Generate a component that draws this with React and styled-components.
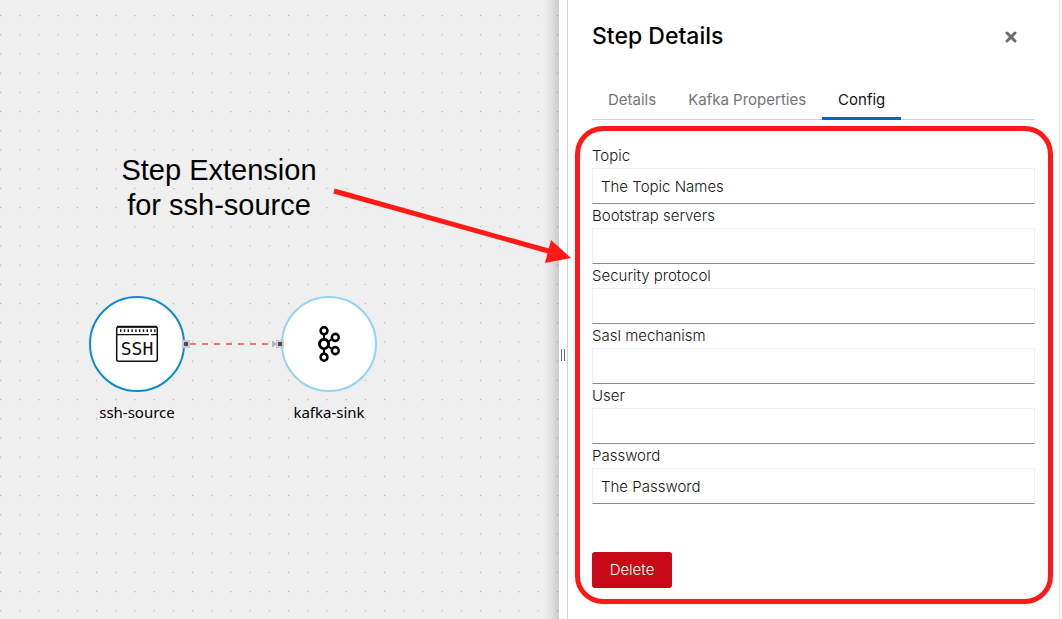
import React from "react";
import styled, { createGlobalStyle } from "styled-components";
import { SiApachekafka } from "react-icons/si";

const GlobalStyle = createGlobalStyle`
  *, *::before, *::after { box-sizing: border-box; }
  body {
    margin: 0;
    background: #fff;
    color: #151515;
    font-family: Inter, "Liberation Sans", sans-serif;
    font-size: 15px;
    font-weight: 350;
    line-height: 24px;
  }
  button, input { font: inherit; color: inherit; }
`;

const Page = styled.div`
  position: relative;
  display: flex;
  min-height: 100vh;
  overflow: hidden;
`;

const Canvas = styled.main`
  position: relative;
  flex: 1;
  min-width: 0;
  overflow: hidden;
  background: #efefef;

  &::after {
    content: "";
    position: absolute;
    inset: 0 0 0 auto;
    width: 16px;
    background: linear-gradient(to right, rgba(3, 3, 3, 0), rgba(3, 3, 3, 0.05) 50%, rgba(3, 3, 3, 0.16));
  }
`;

const Dots = styled.svg`
  position: absolute;
  inset: 0;
  width: 100%;
  height: 100%;
`;

const Edge = styled.svg`
  position: absolute;
  left: 182px;
  top: 338px;
`;

const Note = styled.p`
  position: absolute;
  left: 119px;
  top: 153px;
  width: 200px;
  margin: 0;
  color: #000;
  font: 29px/35px "Liberation Sans", Arial, sans-serif;
  text-align: center;
  white-space: nowrap;
`;

const Node = styled.div`
  position: absolute;
  left: ${(p) => p.$x}px;
  top: 296px;
  display: flex;
  flex-direction: column;
  align-items: center;
  gap: 8px;
  width: 96px;
  color: #000;
  font-family: "Noto Sans", "Open Sans", sans-serif;
  font-weight: 400;
  white-space: nowrap;
`;

const Circle = styled.div`
  display: grid;
  place-items: center;
  width: 96px;
  height: 96px;
  border: 2px solid ${(p) => p.$ring};
  border-radius: 50%;
  background: #fff;
`;

const Handle = styled.span`
  position: absolute;
  top: 44px;
  ${(p) => p.$side}: -5px;
  width: 8px;
  height: 8px;
  border: 2px solid #c9c9c9;
  background: #4f4f4f;
`;

const Splitter = styled.div`
  display: grid;
  place-items: center;
  flex: 0 0 8px;
  padding-top: 91px;
  background: #fff;
`;

const Grip = styled.span`
  width: 4px;
  height: 12px;
  border: solid #6a6e73;
  border-width: 0 1px;
`;

const Panel = styled.aside`
  flex: 0 0 493px;
  padding: 24px 24px 15px;
  border: solid #d2d2d2;
  border-width: 0 1px;
  border-right-color: #e4e4e4;
  background: #fff;
`;

const Gutter = styled.div`
  flex: 0 0 2px;
  background: #fafafa;
`;

const PanelHeader = styled.header`
  display: flex;
  align-items: center;
  justify-content: space-between;
  padding-right: 16px;
  margin-bottom: 32px;
`;

const Title = styled.h1`
  margin: 0;
  color: #000;
  font-size: 23px;
  font-weight: 500;
  line-height: 24px;
`;

const CloseButton = styled.button`
  display: grid;
  place-items: center;
  padding: 4px 2px 2px;
  border: 0;
  background: none;
  color: #6a6e73;
`;

const Tabs = styled.div`
  display: flex;
  border-bottom: 1px solid #d2d2d2;
`;

const Tab = styled.button`
  margin-bottom: -1px;
  padding: 8px 16px 5px;
  border: 0;
  border-bottom: 3px solid ${(p) => (p.$active ? "#06c" : "transparent")};
  background: none;
  color: ${(p) => (p.$active ? "#151515" : "#72767b")};
  font-weight: 400;
`;

const ConfigForm = styled.form`
  margin: 6px -18px 0 -17px;
  padding: 13px 13px 11px 12px;
  border: 5px solid #ff1a17;
  border-radius: 28px;
`;

const Field = styled.label`
  display: block;
`;

const TextInput = styled.input`
  display: block;
  width: 100%;
  height: 36px;
  padding: 0 8px;
  border: 1px solid #f0f0f0;
  border-bottom-color: #8a8d90;
  border-radius: 0;
  background: #fff;
  outline: none;
`;

const DeleteButton = styled.button`
  display: block;
  min-width: 80px;
  margin-top: 48px;
  padding: 6px 16px;
  border: 0;
  border-radius: 3px;
  background: #c90818;
  color: #fff;
`;

const Arrow = styled.svg`
  position: absolute;
  left: 330px;
  top: 184px;
  pointer-events: none;
`;

const SshIcon = () => (
  <svg width="44" height="38" viewBox="0 0 44 38" fill="none" stroke="#111">
    <rect x="1.7" y="1.7" width="40.6" height="34.6" rx="2" strokeWidth="1.5" />
    <path d="M2 1.7H42" strokeWidth="2" />
    <path d="M2 9.6H34M36 9.6H42" strokeWidth="1.3" />
    <path d="M5 5.6H41" strokeWidth="2.8" strokeDasharray="1.4 2.4" />
    <text
      x="22"
      y="30"
      textAnchor="middle"
      fill="#111"
      stroke="none"
      fontFamily="DejaVu Sans Mono"
      fontSize="18"
    >
      SSH
    </text>
  </svg>
);

const fields = [
  ["topic", "Topic", "The Topic Names"],
  ["bootstrap", "Bootstrap servers", ""],
  ["security", "Security protocol", ""],
  ["sasl", "Sasl mechanism", ""],
  ["user", "User", ""],
  ["password", "Password", "The Password"],
];

const tabs = ["Details", "Kafka Properties", "Config"];

export default function App() {
  return (
    <>
      <GlobalStyle />
      <Page>
        <Canvas>
          <Dots aria-hidden="true">
            <defs>
              <pattern id="dots" width="24" height="24" patternUnits="userSpaceOnUse" patternTransform="translate(0 15) scale(0.8)">
                <circle cx="0.8" cy="0.8" r="0.8" fill="#a3a3a3" />
              </pattern>
            </defs>
            <rect width="100%" height="100%" fill="url(#dots)" />
          </Dots>
          <Note>
            Step Extension
            <br />
            for ssh-source
          </Note>
          <Edge width="102" height="12" aria-hidden="true">
            <path d="M8 6H88" stroke="#f77279" strokeWidth="2" strokeDasharray="6 6" />
            <path d="M90 2.5L95 6L90 9.5Z" fill="#b1b1b7" />
          </Edge>
          <Node $x={89}>
            <Circle $ring="#0a8ccf">
              <SshIcon />
            </Circle>
            ssh-source
            <Handle $side="right" />
          </Node>
          <Node $x={281}>
            <Circle $ring="#93d4f5">
              <SiApachekafka size={36} color="#000" />
            </Circle>
            kafka-sink
            <Handle $side="left" />
          </Node>
        </Canvas>
        <Splitter role="separator" aria-orientation="vertical">
          <Grip />
        </Splitter>
        <Panel>
          <PanelHeader>
            <Title>Step Details</Title>
            <CloseButton aria-label="Close">
              <svg width="12" height="12" viewBox="0 0 12 12" stroke="currentColor" strokeWidth="3" strokeLinecap="round">
                <path d="M2 2L10 10M10 2L2 10" />
              </svg>
            </CloseButton>
          </PanelHeader>
          <Tabs role="tablist">
            {tabs.map((name) => (
              <Tab key={name} role="tab" aria-selected={name === "Config"} $active={name === "Config"}>
                {name}
              </Tab>
            ))}
          </Tabs>
          <ConfigForm onSubmit={(e) => e.preventDefault()}>
            {fields.map(([id, label, value]) => (
              <Field key={id} htmlFor={id}>
                {label}
                <TextInput id={id} defaultValue={value} />
              </Field>
            ))}
            <DeleteButton type="button">Delete</DeleteButton>
          </ConfigForm>
        </Panel>
        <Gutter />
        <Arrow width="244" height="84" aria-hidden="true">
          <path d="M4 7L222 68" stroke="#ff1a17" strokeWidth="5" />
          <path d="M221 56L241 74L215 79Z" fill="#ff1a17" />
        </Arrow>
      </Page>
    </>
  );
}
